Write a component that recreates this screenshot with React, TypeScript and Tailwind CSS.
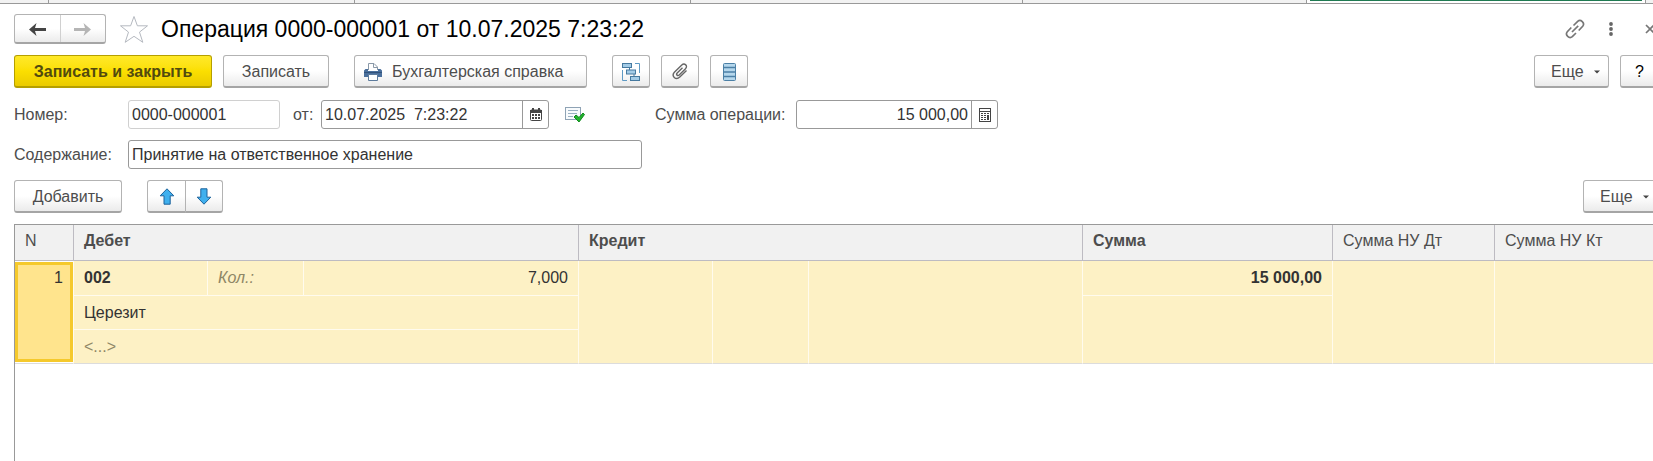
import React from "react";

type ButtonProps = {
  children: React.ReactNode;
  className?: string;
  label?: string;
};

const Button = ({ children, className = "justify-center", label }: ButtonProps) => (
  <button
    type="button"
    aria-label={label}
    className={`flex h-[33px] shrink-0 items-center rounded-[3px] border border-b-2 border-[#b3b3b3] border-b-[#a5a5a5] bg-linear-to-b from-white from-50% to-[#ebebeb] pt-px ${className}`}
  >
    {children}
  </button>
);

const Caret = () => (
  <svg width="6" height="4" viewBox="0 0 6 4" aria-hidden="true">
    <path d="M0 0.5h6L3 3.5z" fill="#444" />
  </svg>
);

const NavArrow = ({ className = "" }: { className?: string }) => (
  <svg width="17" height="13" viewBox="0 0 17 13" className={className} aria-hidden="true">
    <path d="M0 6.500L7.500 0 6 5h11v3H6l1.500 5z" fill="currentColor" />
  </svg>
);

const StarIcon = () => (
  <svg width="30" height="29" viewBox="0 0 30 29" aria-hidden="true">
    <path
      d="M15 1.500l3.400 9.300h10.100l-8 6.300 3.300 10.200L15 21.300l-8.800 6 3.300-10.200-8-6.300h10.100z"
      fill="#fff"
      stroke="#b5b9c0"
    />
  </svg>
);

const LinkIcon = () => (
  <svg width="20" height="20" viewBox="0 0 20 20" fill="none" stroke="#777" strokeWidth="1.7" aria-hidden="true">
    <path d="M8.500 6.500l4.200-4.200c3-2.600 7.600 1.700 5 5l-4 4.200" />
    <path d="M11 14l-3.700 3.700c-3 2.600-7.600-1.700-5-5l4-4.200" />
    <path d="M7 13l6.200-6.200" />
  </svg>
);

const DotsIcon = () => (
  <svg width="4" height="14" viewBox="0 0 4 14" fill="#666" aria-hidden="true">
    <circle cx="2" cy="2" r="1.900" />
    <circle cx="2" cy="7" r="1.900" />
    <circle cx="2" cy="12" r="1.900" />
  </svg>
);

const CloseIcon = () => (
  <svg width="10" height="10" viewBox="0 0 10 10" stroke="#777" strokeWidth="1.7" aria-hidden="true">
    <path d="M1 1l8 8M9 1L1 9" />
  </svg>
);

const PrinterIcon = () => (
  <svg width="18" height="18" viewBox="0 0 18 18" aria-hidden="true">
    <path d="M4.500 7V.5h5.500l3.500 3.500V7" fill="#fff" stroke="#8a99a8" />
    <path d="M9.500.5v4h4" fill="none" stroke="#8a99a8" />
    <path d="M1.500 6H4v2h10V6h2.500L18 7.500V14H0V7.500z" fill="#4a6f9c" />
    <path d="M0 9.500h18" stroke="#31527a" />
    <path d="M4.500 11.500h9v6h-9z" fill="#fff" stroke="#5d7b9c" />
  </svg>
);

const StructureIcon = () => (
  <svg width="18" height="18" viewBox="0 0 18 18" fill="none" aria-hidden="true">
    <path d="M13 .5h4.500V10M.5 7v10.500H5" stroke="#5f9ac4" />
    <path d="M7.500 4v3M12 10v4" stroke="#46799f" />
    <g fill="#a3cbe6" stroke="#46799f">
      <rect x=".5" y=".5" width="9" height="4" />
      <rect x="4.500" y="7" width="9" height="4" />
      <rect x="8.500" y="13.500" width="9" height="4" />
    </g>
  </svg>
);

const ClipIcon = () => (
  <svg width="16" height="17" viewBox="0 0 16 17" fill="none" stroke="#666" strokeWidth="1.4" aria-hidden="true">
    <path d="M10.500 4.800L5.200 10c-1.500 1.600.5 3.400 2 2l6.300-6.200c2.800-3-1-6.200-3.700-3.800L2.600 9c-3.800 4 1.200 8.800 5.200 5l6.700-6.600" />
  </svg>
);

const ListIcon = () => (
  <svg width="13" height="18" viewBox="0 0 13 18" fill="#b5d7ec" stroke="#4c80a6" aria-hidden="true">
    <rect x=".5" y=".5" width="12" height="17" rx="1" />
    <path d="M.5 4.500h12M.5 9h12M.5 13.500h12" strokeWidth="1.5" />
  </svg>
);

const CalendarIcon = () => (
  <svg width="12" height="13" viewBox="0 0 12 13" aria-hidden="true">
    <rect x=".5" y="2" width="11" height="10.500" rx="1" fill="#fff" stroke="#444" />
    <path d="M0 2h12v3H0zM2 0h2v3H2zM8 0h2v3H8z" fill="#444" />
    <path
      d="M2 6h2v2H2zM5 6h2v2H5zM8 6h2v2H8zM2 9h2v2H2zM5 9h2v2H5zM8 9h2v2H8z"
      fill="#444"
    />
  </svg>
);

const CalculatorIcon = () => (
  <svg width="12" height="14" viewBox="0 0 12 14" aria-hidden="true">
    <rect x=".5" y=".5" width="11" height="13" fill="#fff" stroke="#444" />
    <path d="M0 3.500h12" stroke="#444" />
    <path
      d="M2 5h2v1H2zM5 5h2v1H5zM8 5h2v1H8zM2 7h2v1H2zM5 7h2v1H5zM8 7h2v5H8zM2 9h2v1H2zM5 9h2v1H5zM2 11h2v1H2zM5 11h2v1H5z"
      fill="#444"
    />
  </svg>
);

const PostedIcon = () => (
  <svg width="20" height="16" viewBox="0 0 20 16" aria-hidden="true">
    <rect x=".5" y=".5" width="15" height="12" fill="#f8fbfd" stroke="#8fa3b5" />
    <path d="M3 3.500h10M3 6.500h9M3 9.500h5" stroke="#9ab0c2" />
    <path d="M9 10l2-2 3 2.500L18 6l1.500 1.500L14 15z" fill="#21b32c" stroke="#128a20" />
  </svg>
);

const MoveArrow = ({ className = "" }: { className?: string }) => (
  <svg width="16" height="17" viewBox="0 0 16 17" className={className} aria-hidden="true">
    <path
      d="M8 .8l6.800 7h-3.600v8.400H5V7.800H1.200z"
      fill="#3fb0ee"
      stroke="#1d639c"
      strokeLinejoin="round"
    />
  </svg>
);

const inputClass = "h-[29px] bg-white px-[3px] text-[#333] outline-none";
const headClass = "border-r border-b border-[#bdbbc2] px-2.5 pb-1 text-left";
const cellClass = "border-r border-b border-[#fffbee] px-2.5";
const lastCellClass = "border-r border-b border-r-[#fffbee] border-b-[#dcdcdc] px-2.5";

const App = () => {
  return (
    <div className="flex min-h-screen flex-col overflow-hidden bg-white font-['Liberation_Sans',Arial,sans-serif] text-base leading-5 text-[#4d4d4d]">
      {/* Bottom edge of the window tabs */}
      <div className="flex h-1 shrink-0 border-b border-[#999] bg-[#f2f2f2]">
        <div className="w-[49px] border-r border-[#999]" />
        <div className="w-[306px] border-r border-[#999]" />
        <div className="w-[336px] border-r border-[#999]" />
        <div className="w-[332px] border-r border-[#999]" />
        <div className="w-[284px] border-r border-[#999]" />
        <div className="flex-1 bg-white px-[3px]">
          <div className="h-px bg-[#1f7a52]" />
        </div>
        <div className="w-2 border-l border-[#999]" />
      </div>

      {/* Title */}
      <header className="mt-2.5 flex h-[30px] items-center pl-3.5">
        <div className="flex h-[30px] w-[92px] rounded-[3px] border border-b-2 border-[#b3b3b3] border-b-[#a5a5a5] bg-linear-to-b from-white from-50% to-[#ebebeb]">
          <button type="button" aria-label="Назад" className="flex flex-1 items-center justify-center border-r border-[#d0d0d0] pt-px">
            <NavArrow className="text-[#444]" />
          </button>
          <button type="button" aria-label="Вперед" className="flex flex-1 items-center justify-center pt-px">
            <NavArrow className="rotate-180 text-[#b5b5b5]" />
          </button>
        </div>
        <button type="button" aria-label="Избранное" className="ml-[13px]">
          <StarIcon />
        </button>
        <h1 className="ml-3 text-[23px] leading-7 text-black">
          Операция 0000-000001 от 10.07.2025 7:23:22
        </h1>
        <div className="-mr-0.5 ml-auto flex items-center">
          <button type="button" aria-label="Ссылка">
            <LinkIcon />
          </button>
          <button type="button" aria-label="Меню" className="ml-6">
            <DotsIcon />
          </button>
          <button type="button" aria-label="Закрыть" className="ml-8">
            <CloseIcon />
          </button>
        </div>
      </header>

      {/* Main commands */}
      <div className="-mr-2 mt-[11px] flex pl-3.5">
        <button
          type="button"
          className="h-[33px] w-[198px] rounded-[3px] border border-b-2 border-[#b59f00] bg-linear-to-b from-[#ffe927] via-[#fbdf00] to-[#ebcb00] pt-px font-bold text-[#514a0f]"
        >
          Записать и закрыть
        </button>
        <Button className="ml-[11px] w-[106px] justify-center">Записать</Button>
        <Button className="ml-[25px] w-[233px] gap-2.5 pl-[9px]">
          <PrinterIcon />
          Бухгалтерская справка
        </Button>
        <Button label="Структура подчиненности" className="ml-[25px] w-[38px] justify-center">
          <StructureIcon />
        </Button>
        <Button label="Присоединенные файлы" className="ml-[11px] w-[38px] justify-center">
          <ClipIcon />
        </Button>
        <Button label="Реестр" className="ml-[11px] w-[38px] justify-center">
          <ListIcon />
        </Button>
        <Button className="ml-auto w-[75px] gap-2.5 pl-4">
          Еще
          <Caret />
        </Button>
        <Button className="ml-[11px] w-[41px] pl-3.5 text-black">?</Button>
      </div>

      {/* Document fields */}
      <div className="mt-3 flex items-center pl-3.5">
        <label htmlFor="number" className="w-[114px]">
          Номер:
        </label>
        <input
          id="number"
          readOnly
          value="0000-000001"
          className={`${inputClass} w-[152px] rounded-[3px] border border-[#d0d0d0]`}
        />
        <label htmlFor="date" className="ml-[13px] w-7">
          от:
        </label>
        <div className="flex rounded-[3px] border border-[#999]">
          <input
            id="date"
            defaultValue="10.07.2025  7:23:22"
            className="h-[27px] w-[200px] rounded-l-[3px] px-[3px] whitespace-pre text-[#333] outline-none"
          />
          <button type="button" aria-label="Календарь" className="flex w-[26px] items-center justify-center border-l border-[#999]">
            <CalendarIcon />
          </button>
        </div>
        <span className="ml-4">
          <PostedIcon />
        </span>
        <label htmlFor="total" className="ml-[70px] w-[141px]">
          Сумма операции:
        </label>
        <div className="flex rounded-[3px] border border-[#999]">
          <input
            id="total"
            defaultValue="15 000,00"
            className="h-[27px] w-[174px] rounded-l-[3px] px-[3px] text-right text-[#333] outline-none"
          />
          <button type="button" aria-label="Калькулятор" className="flex w-[26px] items-center justify-center border-l border-[#999]">
            <CalculatorIcon />
          </button>
        </div>
      </div>
      <div className="mt-[11px] flex items-center pl-3.5">
        <label htmlFor="content" className="w-[114px]">
          Содержание:
        </label>
        <input
          id="content"
          defaultValue="Принятие на ответственное хранение"
          className={`${inputClass} w-[514px] rounded-[3px] border border-[#999]`}
        />
      </div>

      {/* Table commands */}
      <div className="-mr-2 mt-[11px] flex pl-3.5">
        <Button className="w-[108px] justify-center">Добавить</Button>
        <Button label="Переместить вверх" className="ml-[25px] w-[39px] justify-center rounded-r-none">
          <MoveArrow />
        </Button>
        <Button label="Переместить вниз" className="-ml-px w-[38px] justify-center rounded-l-none">
          <MoveArrow className="rotate-180" />
        </Button>
        <Button className="ml-auto w-[78px] gap-2.5 pl-4">
          Еще
          <Caret />
        </Button>
      </div>

      {/* Entries */}
      <div className="mt-[11px] ml-3.5 flex-1 border-t border-l border-[#999]">
        <table className="w-full table-fixed border-separate border-spacing-0">
          <colgroup>
            <col className="w-[59px]" />
            <col className="w-[134px]" />
            <col className="w-[96px]" />
            <col className="w-[275px]" />
            <col className="w-[134px]" />
            <col className="w-[96px]" />
            <col className="w-[274px]" />
            <col className="w-[250px]" />
            <col className="w-[162px]" />
            <col />
          </colgroup>
          <thead className="bg-[#f1f1f1]">
            <tr className="h-9">
              <th className={`${headClass} font-normal`}>N</th>
              <th colSpan={3} className={headClass}>
                Дебет
              </th>
              <th colSpan={3} className={headClass}>
                Кредит
              </th>
              <th className={headClass}>Сумма</th>
              <th className={`${headClass} font-normal`}>Сумма НУ Дт</th>
              <th className={`${headClass} border-r-0 font-normal`}>Сумма НУ Кт</th>
            </tr>
          </thead>
          <tbody className="bg-[#fdf1c5] text-[#333]">
            <tr className="h-[35px]">
              <td rowSpan={3} className="border-r border-b border-r-[#fffbee] border-b-[#dcdcdc] bg-white py-px text-right align-top">
                <div className="h-[100px] border-3 border-[#f5c92c] bg-[#ffe48d] px-[7px] py-[3px]">1</div>
              </td>
              <td className={`${cellClass} font-bold`}>002</td>
              <td className={`${cellClass} text-[#8f8766] italic`}>Кол.:</td>
              <td className={`${cellClass} text-right`}>7,000</td>
              <td rowSpan={3} className={lastCellClass} />
              <td rowSpan={3} className={lastCellClass} />
              <td rowSpan={3} className={lastCellClass} />
              <td className={`${cellClass} text-right font-bold`}>15 000,00</td>
              <td rowSpan={3} className={lastCellClass} />
              <td rowSpan={3} className={`${lastCellClass} border-r-0`} />
            </tr>
            <tr className="h-[34px]">
              <td colSpan={3} className={cellClass}>
                Церезит
              </td>
              <td rowSpan={2} className={lastCellClass} />
            </tr>
            <tr className="h-[34px]">
              <td colSpan={3} className={`${lastCellClass} text-[#8f8766]`}>
                &lt;...&gt;
              </td>
            </tr>
          </tbody>
        </table>
      </div>
    </div>
  );
};

export default App;
